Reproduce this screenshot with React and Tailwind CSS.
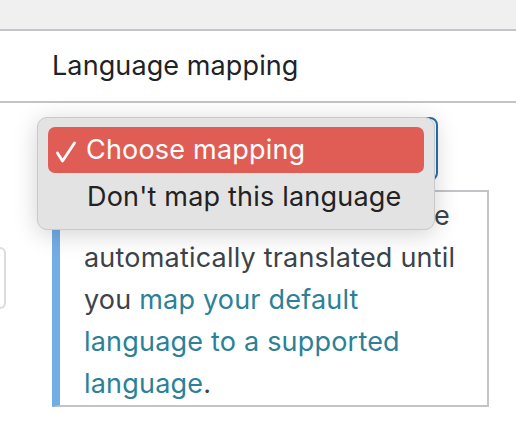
export default function App() {
  return (
    <div className="w-[516px] h-[436px] overflow-hidden bg-white relative font-['Inter','Liberation_Sans',sans-serif]">
      <div className="h-[31px] bg-[#f0f0f1] border-b-2 border-[#c3c4c7]" />
      <div className="h-[72px] flex items-center pl-[52px] border-b-2 border-[#c3c4c7] text-[27px] tracking-[0.1px] text-[#1d2327]">
        Language mapping
      </div>
      <div className="flex pt-[14px]">
        <div className="mt-[130px] h-[62px] w-[6px] shrink-0 border-2 border-l-0 rounded-r-md border-[#dcdcde] bg-white" />
        <div className="ml-[46px] w-[437px] shrink-0">
          <div className="relative h-[64px] w-[386px] border-2 border-[#2271b1] rounded-lg bg-white">
            <div className="absolute left-[-17px] top-[-2px] z-10 w-[398px] h-[113px] rounded-[10px] bg-[#e3e3e3] border border-[#c9c9c9] shadow-[0_4px_24px_rgba(0,0,0,0.18)] px-[10px] pt-[9px] text-[27px] tracking-[0.2px]">
              <div className="h-[46px] rounded-[7px] bg-[#e05d55] flex items-center text-white">
                <svg width="30" height="46" viewBox="0 0 30 46" className="ml-[6px] shrink-0">
                  <polyline points="3.5,26 8.5,34 20.5,16" fill="none" stroke="white" strokeWidth="2.8" strokeLinecap="round" strokeLinejoin="round" />
                </svg>
                <span className="ml-[2px]">Choose mapping</span>
              </div>
              <div className="h-[48px] flex items-center pl-[39px] text-[#222222]">
                Don't map this language
              </div>
            </div>
          </div>
          <div className="mt-[9px] h-[217px] border-2 border-l-[8px] border-[#c3c4c7] border-l-[#72aee6] bg-white pl-[24px] pt-[3px] text-[27px] tracking-[0.2px] leading-[42px] text-[#3c434a]">
            <div className="w-[366px] text-right whitespace-nowrap overflow-hidden">Your content will not be</div>
            <div>automatically translated until</div>
            <div>
              you <a className="text-[#2b8197]">map your default</a>
            </div>
            <div>
              <a className="text-[#2b8197]">language to a supported</a>
            </div>
            <div>
              <a className="text-[#2b8197]">language</a>.
            </div>
          </div>
        </div>
      </div>
    </div>
  );
}
